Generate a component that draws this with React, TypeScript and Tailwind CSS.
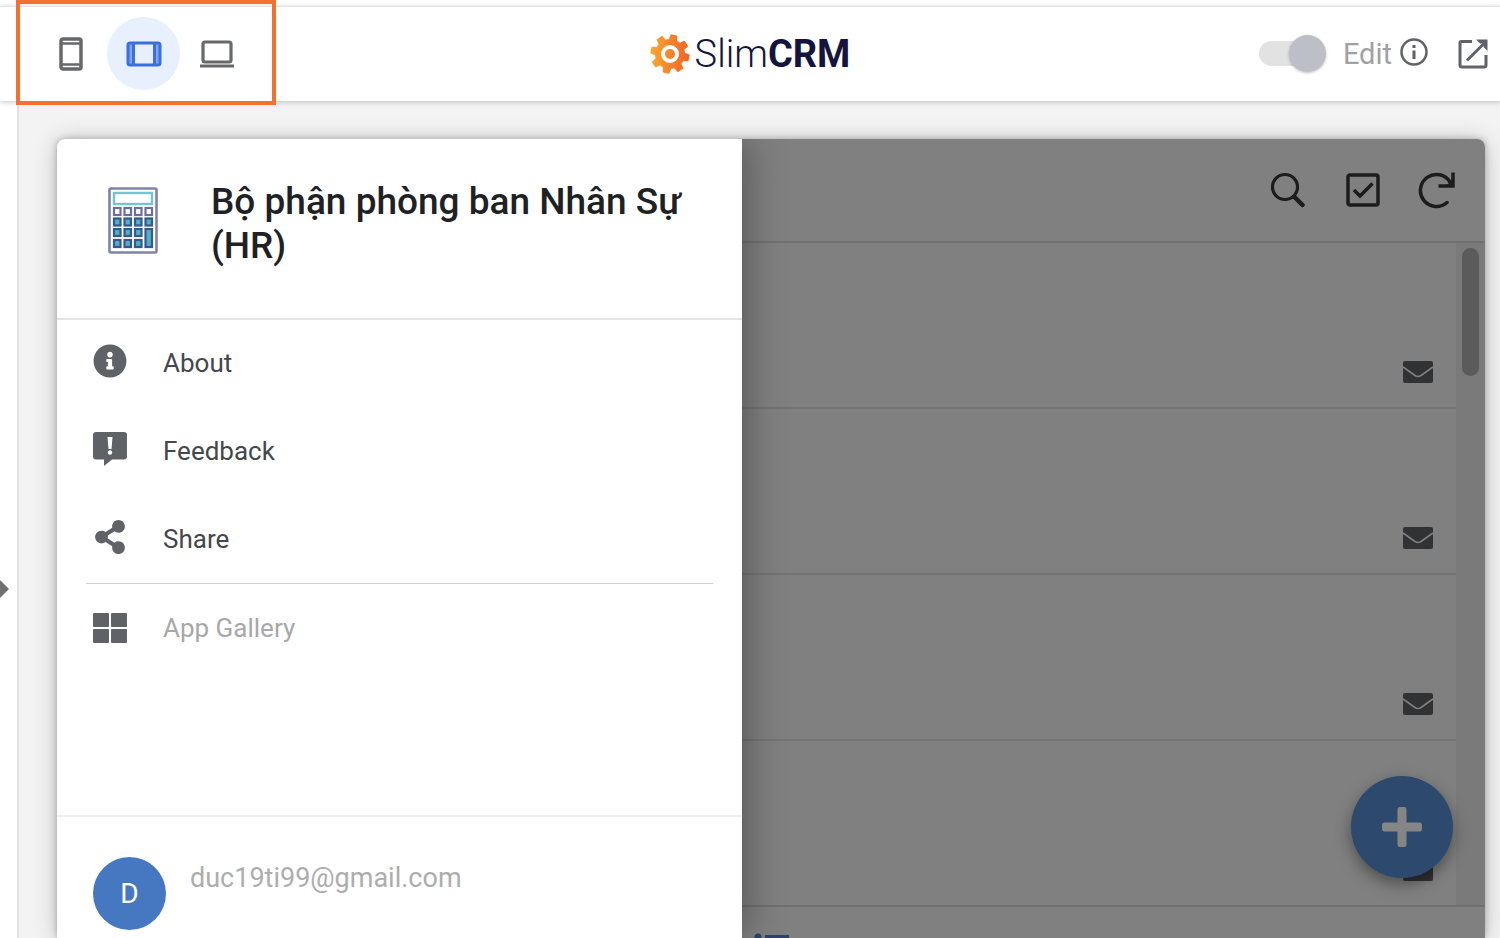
import { useState } from 'react';
import { FaInfoCircle, FaShareAlt } from 'react-icons/fa';

function PhoneIcon() {
  return (
    <svg width="24" height="34" viewBox="0 0 24 34" fill="none" stroke="currentColor" strokeWidth="3.500">
      <rect x="2" y="2" width="20" height="30" rx="2" />
      <path d="M2 6.500H22M2 27.500H22" strokeWidth="2.500" />
    </svg>
  );
}

function TabletIcon() {
  return (
    <svg width="36" height="26" viewBox="0 0 36 26" fill="none" stroke="currentColor" strokeWidth="3">
      <rect x="2" y="2" width="32" height="22" rx="2" />
      <path d="M7.500 2V24M28.500 2V24" />
      <path d="M4.500 3V23M31.500 3V23" strokeOpacity="0.600" strokeWidth="3" />
    </svg>
  );
}

function LaptopIcon() {
  return (
    <svg width="36" height="28" viewBox="0 0 36 28" fill="none" stroke="currentColor" strokeWidth="3.200">
      <rect x="4" y="2" width="28" height="20" rx="2" />
      <path d="M1 26H35" />
    </svg>
  );
}

function OpenIcon() {
  return (
    <svg width="30" height="30" viewBox="0 0 30 30" fill="none" stroke="currentColor" strokeWidth="3">
      <path d="M14 2.500H3.500Q2 2.500 2 4V26Q2 28 4 28H26Q28 28 28 26V16" />
      <path d="M9 21.500L26 4.500" />
      <path d="M18 0.500H29.500V12L25.500 8V4.500H22Z" fill="currentColor" stroke="none" />
    </svg>
  );
}

function InfoIcon() {
  return (
    <svg width="28" height="28" viewBox="0 0 28 28" fill="none" stroke="currentColor" strokeWidth="2.500">
      <circle cx="14" cy="14" r="12.500" />
      <path d="M14 12.500V21M14 7V10" strokeWidth="3" />
    </svg>
  );
}

function GearIcon() {
  const teeth = [0, 45, 90, 135, 180, 225, 270, 315];
  return (
    <svg width="40" height="40" viewBox="0 0 40 40">
      <defs>
        <linearGradient id="gear" gradientUnits="userSpaceOnUse" x1="2" y1="0" x2="38" y2="0">
          <stop offset="0" stopColor="#fba32f" />
          <stop offset="1" stopColor="#f16529" />
        </linearGradient>
        <mask id="gear-shape">
          <circle cx="20" cy="20" r="15" fill="#fff" />
          {teeth.map((angle) => (
            <path
              key={angle}
              d="M15.500 8L16.500 1Q16.600 0.500 17.200 0.500H22.800Q23.400 0.500 23.500 1L24.500 8Z"
              fill="#fff"
              transform={`rotate(${angle + 12} 20 20)`}
            />
          ))}
          <circle cx="20" cy="20" r="7" fill="none" stroke="#000" strokeWidth="4" />
        </mask>
      </defs>
      <rect width="40" height="40" fill="url(#gear)" mask="url(#gear-shape)" />
    </svg>
  );
}

function CalculatorIcon() {
  const columns = [6.5, 17, 27.5, 38];
  const rows = [21, 31.5, 42, 53];
  return (
    <svg width="50" height="67" viewBox="0 0 50 67" fill="none">
      <rect x="1.500" y="1.500" width="47" height="64" rx="1.500" stroke="#7f83ab" strokeWidth="2.600" />
      <rect x="6" y="6" width="38" height="11" stroke="#74c5cd" strokeWidth="2.400" />
      {rows.map((y, row) =>
        columns.map((x, col) => {
          if (row === 3 && col === 3) return null;
          const tall = row === 2 && col === 3;
          return (
            <rect
              key={`${x}-${y}`}
              x={x - 0.5}
              y={y}
              width="6.500"
              height={tall ? 18 : 7}
              fill={row === 0 ? '#fff' : '#4fb0c6'}
              stroke={row === 0 ? '#6c6f9d' : '#36588c'}
              strokeWidth="2.200"
            />
          );
        })
      )}
    </svg>
  );
}

function FeedbackIcon() {
  return (
    <svg width="34" height="34" viewBox="0 0 34 34">
      <path d="M3 0H31Q34 0 34 3V24.500Q34 27.500 31 27.500H19L11 34V27.500H3Q0 27.500 0 24.500V3Q0 0 3 0Z" fill="currentColor" />
      <path d="M14.500 5H19.500L18.500 17H15.500Z" fill="#fff" />
      <circle cx="17" cy="20.500" r="2.200" fill="#fff" />
    </svg>
  );
}

function GalleryIcon() {
  return (
    <svg width="34" height="30" viewBox="0 0 34 30" fill="currentColor">
      <rect width="16" height="14" rx="1" />
      <rect x="18" width="16" height="14" rx="1" />
      <rect y="16" width="16" height="14" rx="1" />
      <rect x="18" y="16" width="16" height="14" rx="1" />
    </svg>
  );
}

function SearchIcon() {
  return (
    <svg width="38" height="36" viewBox="0 0 38 36" fill="none" stroke="currentColor" strokeLinecap="round">
      <circle cx="15" cy="15" r="12.500" strokeWidth="3.200" />
      <path d="M24.500 25L32.500 33" strokeWidth="4.500" />
    </svg>
  );
}

function CheckIcon() {
  return (
    <svg width="34" height="34" viewBox="0 0 34 34" fill="none" stroke="currentColor">
      <rect x="2" y="2" width="30" height="30" rx="2" strokeWidth="3.500" />
      <path d="M8 17L14 23L26.500 10.500" strokeWidth="3.500" />
    </svg>
  );
}

function RefreshIcon() {
  return (
    <svg width="38" height="38" viewBox="0 0 38 38" fill="none" stroke="currentColor" strokeWidth="3.500">
      <path d="M29 31.500A16 16 0 1 1 32 11" strokeLinecap="round" />
      <path d="M35 1.500V15H20.500" />
      <path d="M28 15L35 8V15Z" fill="currentColor" stroke="none" />
    </svg>
  );
}

function MailIcon() {
  return (
    <svg width="30" height="22" viewBox="0 0 30 22">
      <rect width="30" height="22" rx="2" fill="currentColor" />
      <path d="M0 6L12 14.500Q15 16.500 18 14.500L30 6" fill="none" stroke="#808080" strokeWidth="1.600" />
    </svg>
  );
}

export default function App() {
  const [device, setDevice] = useState('tablet');
  const [editing, setEditing] = useState(true);

  const devices = [
    { id: 'phone', name: 'Phone', icon: <PhoneIcon /> },
    { id: 'tablet', name: 'Tablet', icon: <TabletIcon /> },
    { id: 'desktop', name: 'Desktop', icon: <LaptopIcon /> },
  ];

  const menu = [
    { name: 'About', icon: <FaInfoCircle size={34} /> },
    { name: 'Feedback', icon: <FeedbackIcon /> },
    { name: 'Share', icon: <FaShareAlt size={34} /> },
  ];

  const rows = [1, 2, 3, 4];

  return (
    <div className="relative flex h-screen flex-col overflow-hidden bg-white font-[Roboto,sans-serif]">
      <header className="relative z-10 mt-[6px] grid h-[95px] shrink-0 grid-cols-[1fr_auto_1fr] items-center border-t border-[#e4e4e4] bg-white pb-px shadow-[0_1px_5px_rgba(60,64,67,0.3)]">
        <div className="flex pl-[34px]">
          {devices.map((item) => (
            <button
              key={item.id}
              type="button"
              aria-label={item.name}
              onClick={() => setDevice(item.id)}
              className={`flex size-[73px] items-center justify-center rounded-full ${
                device === item.id ? 'bg-[#e8effd] text-[#3a70dc]' : 'text-[#66686c]'
              }`}
            >
              {item.icon}
            </button>
          ))}
        </div>

        <a href="#" className="flex items-center gap-[5px] text-[38px] leading-[48px] text-[#14143f]">
          <GearIcon />
          <span className="font-light">
            Slim<b className="font-bold">CRM</b>
          </span>
        </a>

        <div className="flex items-center justify-end pr-3">
          <input
            id="edit"
            type="checkbox"
            checked={editing}
            onChange={() => setEditing(!editing)}
            className="relative mr-6 h-[25px] w-[60px] appearance-none rounded-full bg-[#e2e2e2] before:absolute before:-top-[6px] before:left-0 before:size-[37px] before:rounded-full before:bg-[#bcc0c6] before:shadow-[0_1px_3px_rgba(0,0,0,0.25)] checked:before:left-[30px]"
          />
          <label htmlFor="edit" className="mr-2 text-[29px] leading-8 text-[#9fa1a4]">
            Edit
          </label>
          <button type="button" aria-label="Info" className="mr-[30px] pb-1 text-[#5f6368]">
            <InfoIcon />
          </button>
          <button type="button" aria-label="Open in new tab" className="text-[#5f6368]">
            <OpenIcon />
          </button>
        </div>
      </header>

      <div className="flex min-h-0 flex-1">
        <div className="w-[19px] shrink-0 border-r-2 border-[#e0e0e0] pt-[479px] text-[#6e7073]">
          <svg width="9" height="18" viewBox="0 0 9 18" fill="currentColor">
            <path d="M0 0L9 9L0 18Z" />
          </svg>
        </div>

        <main className="flex min-w-0 flex-1 bg-[#f3f3f3] pt-[38px] pr-[15px] pl-[38px]">
          <div className="flex min-w-0 flex-1 rounded-t-lg shadow-[0_2px_24px_rgba(0,0,0,0.22),0_0_6px_rgba(0,0,0,0.25)]">
            <aside className="relative z-10 flex w-[48%] shrink-0 flex-col rounded-tl-lg bg-white shadow-[4px_0_40px_rgba(0,0,0,0.35)] [clip-path:inset(0_-60px_0_0_round_8px_0_0_0)]">
              <div className="flex h-[181px] shrink-0 border-b-2 border-[#e4e4e4] pt-[41px] pr-10 pl-[51px]">
                <div className="w-[103px] shrink-0 pt-[7px]">
                  <CalculatorIcon />
                </div>
                <h1 className="text-[37px] leading-[44px] font-medium text-[#202124]">Bộ phận phòng ban Nhân Sự (HR)</h1>
              </div>

              <nav className="-mt-px flex-1">
                {menu.map((item) => (
                  <a key={item.name} href="#" className="flex h-[88px] items-center pl-9 text-[26px] text-[#44474b]">
                    <span className="w-[70px] pb-1 text-[#5f6368]">{item.icon}</span>
                    {item.name}
                  </a>
                ))}
                <hr className="mx-[29px] border-t border-[#d2d2d2]" />
                <a href="#" className="flex h-[88px] items-center pl-9 text-[26px] text-[#a8a8a8]">
                  <span className="w-[70px] pb-px text-[#5f6368]">
                    <GalleryIcon />
                  </span>
                  App Gallery
                </a>
              </nav>

              <div className="flex shrink-0 gap-6 border-t-2 border-[#f0f0f0] pt-10 pb-2 pl-9">
                <div className="flex size-[73px] items-center justify-center rounded-full bg-[#4578c1] text-[28px] text-white">
                  D
                </div>
                <p className="pt-1 text-[27px] leading-[34px] text-[#adadad]">duc19ti99@gmail.com</p>
              </div>
            </aside>

            <section className="relative flex min-w-0 flex-1 flex-col overflow-hidden rounded-tr-lg bg-[#808080]">
              <div className="flex h-[104px] shrink-0 items-center justify-end gap-[38px] border-b-2 border-[#727272] pr-[29px] text-[#1c1c1d]">
                <button type="button" aria-label="Search">
                  <SearchIcon />
                </button>
                <button type="button" aria-label="Select">
                  <CheckIcon />
                </button>
                <button type="button" aria-label="Refresh">
                  <RefreshIcon />
                </button>
              </div>

              <div className="flex min-h-0 flex-1 overflow-hidden">
                <ul className="flex-1">
                  {rows.map((row) => (
                    <li key={row} className="flex h-[166px] items-end justify-end border-b-2 border-[#747474] pr-[23px] pb-6">
                      <button type="button" aria-label="Send email" className="text-[#303234]">
                        <MailIcon />
                      </button>
                    </li>
                  ))}
                </ul>
                <div className="w-[29px] bg-[#7a7a7a] pt-[5px] pl-[6px]">
                  <div className="h-32 w-[17px] rounded-full bg-[#5b5b5b]" />
                </div>
              </div>

              <footer className="h-[33px] shrink-0 border-t-2 border-[#707070] pt-[26px] pl-3 text-[#2b446b]">
                <svg width="36" height="28" viewBox="0 0 36 28" fill="currentColor">
                  <circle cx="4" cy="4" r="3.500" />
                  <circle cx="4" cy="14" r="3.500" />
                  <circle cx="4" cy="24" r="3.500" />
                  <rect x="11" y="2" width="24" height="4" />
                  <rect x="11" y="12" width="24" height="4" />
                  <rect x="11" y="22" width="24" height="4" />
                </svg>
              </footer>

              <button
                type="button"
                aria-label="Add"
                className="absolute right-8 bottom-[60px] flex size-[102px] items-center justify-center rounded-full bg-[#2d496e] text-[#858585] shadow-[0_6px_16px_rgba(0,0,0,0.4)]"
              >
                <svg width="40" height="40" viewBox="0 0 40 40" fill="currentColor">
                  <rect x="15.500" width="9" height="40" rx="2.500" />
                  <rect y="15.500" width="40" height="9" rx="2.500" />
                </svg>
              </button>
            </section>
          </div>
        </main>
      </div>

      {/* highlight around the device switcher */}
      <div className="pointer-events-none absolute top-0 left-4 z-20 h-[105px] w-[260px] border-4 border-[#f37130]" />
    </div>
  );
}
